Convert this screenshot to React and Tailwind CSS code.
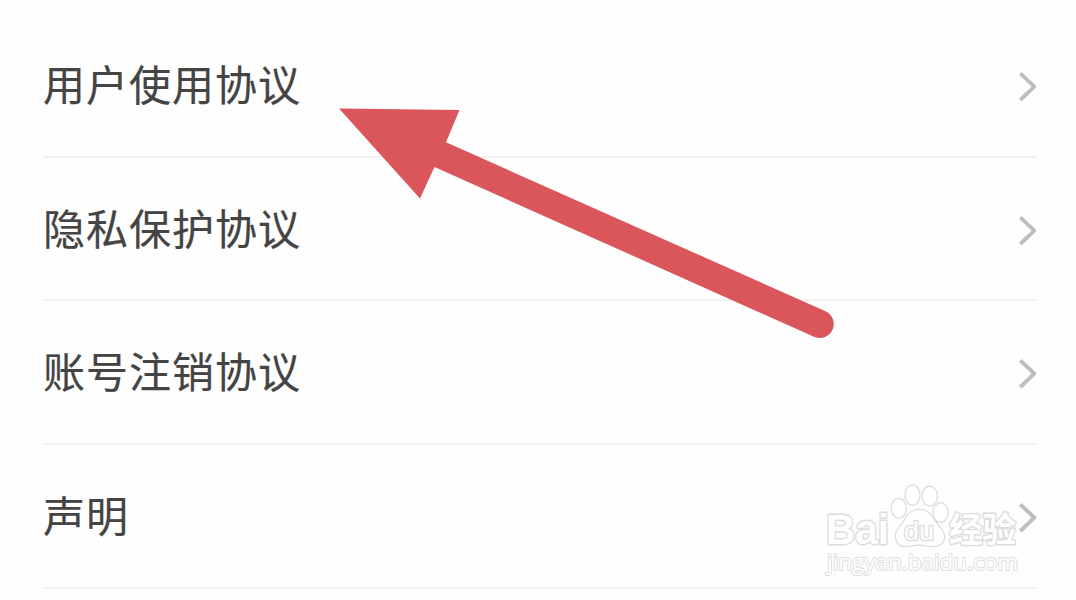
const ROWS = [
  { label: '用户使用协议', height: 'h-[145px]' },
  { label: '隐私保护协议', height: 'h-[143px]' },
  { label: '账号注销协议', height: 'h-[144px]' },
  { label: '声明', height: 'h-[144px]' },
]

function Chevron() {
  return (
    <svg className="mt-[4px] h-[32px] w-[20px] shrink-0" viewBox="0 0 20 32" fill="none">
      <path d="M3.300 2.300L17.300 15.700L3.300 29" stroke="#bdbdbd" strokeWidth="3.8" strokeLinejoin="round" />
    </svg>
  )
}

function Row({ label, height }) {
  return (
    <li className={`flex items-center justify-between border-b-2 border-[#f2f2f2] ${height}`}>
      <span className="pb-[4px] text-[42px] leading-none tracking-[1px] text-[#444444] [-webkit-text-stroke:0.2px_#444444]">
        {label}
      </span>
      <Chevron />
    </li>
  )
}

function Arrow() {
  return (
    <svg className="absolute left-[330px] top-[100px] h-[250px] w-[520px]" viewBox="330 100 520 250">
      <path
        d="M339 108.5L459.500 110L446 142.300L825 311A14 14 0 0 1 814.500 337L434.500 167L420 198.500Z"
        fill="#da565b"
      />
    </svg>
  )
}

function Watermark() {
  return (
    <svg
      className="absolute left-[816px] top-[476px] h-[116px] w-[220px] [paint-order:stroke]"
      viewBox="816 476 220 116"
      fill="#ffffff"
      stroke="#dcdcdc"
      strokeWidth="2.8"
      strokeLinejoin="round"
    >
      <text x="826" y="544" textLength="63" lengthAdjust="spacingAndGlyphs" className="font-['Liberation_Sans'] text-[43px] font-bold">
        Bai
      </text>
      <g strokeWidth="2.6">
        <ellipse cx="898.800" cy="508.300" rx="6.900" ry="9.200" />
        <ellipse cx="912.500" cy="495" rx="6.900" ry="9.400" />
        <ellipse cx="929.700" cy="496" rx="7.200" ry="9.200" />
        <ellipse cx="940.500" cy="512.500" rx="7" ry="9.200" />
        <path d="M919 510C926 510 931 514 934 520C937 526 944 530 944 537C944 543 939 546 933 546C928 546 925 544.500 919 544.500C914 544.500 910 546 905 546C899 546 896 541 896 536C896 529 902 526 905 520C908 514 912 510 919 510Z" />
      </g>
      <text x="904" y="540" strokeWidth="2.6" textLength="30" lengthAdjust="spacingAndGlyphs" className="font-['Liberation_Sans'] text-[26px]">
        du
      </text>
      <text x="949" y="542" textLength="67" lengthAdjust="spacingAndGlyphs" className="font-['Noto_Sans_CJK_SC'] text-[34px] font-bold">
        经验
      </text>
      <text x="827" y="570" strokeWidth="2" stroke="#dedede" textLength="191" lengthAdjust="spacingAndGlyphs" className="font-['Open_Sans'] text-[22px]">
        jingyan.baidu.com
      </text>
    </svg>
  )
}

export default function App() {
  return (
    <main className="relative h-[600px] w-[1076px] overflow-hidden bg-[#fefefe] font-['Noto_Sans_CJK_SC',sans-serif]">
      <ul className="pl-[43px] pr-[39px] pt-[13px]">
        {ROWS.map((row) => (
          <Row key={row.label} {...row} />
        ))}
      </ul>
      <Watermark />
      <Arrow />
    </main>
  )
}
